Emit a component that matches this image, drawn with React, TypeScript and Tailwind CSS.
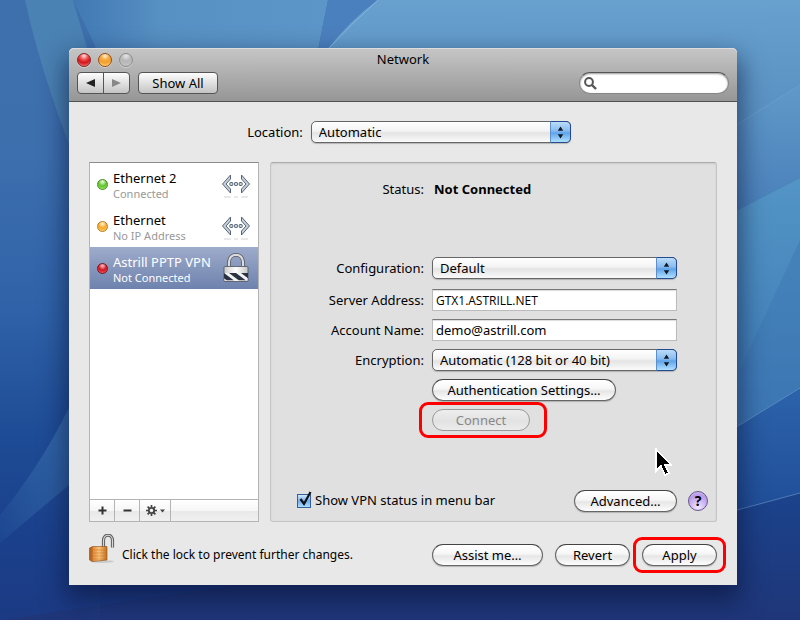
import type { ReactNode } from "react";

const FONT = "font-['Noto_Sans','Open_Sans',sans-serif]";

function Wallpaper() {
  return (
    <svg className="absolute inset-0 h-full w-full" viewBox="0 0 800 620" preserveAspectRatio="none" aria-hidden="true">
      <defs>
        <linearGradient id="deep" x1="0" y1="0" x2="0" y2="1">
          <stop offset="0" stopColor="#3d70ac" />
          <stop offset="0.25" stopColor="#3d6fae" />
          <stop offset="0.5" stopColor="#2f62a8" />
          <stop offset="0.7" stopColor="#1e4c96" />
          <stop offset="0.85" stopColor="#1b418c" />
          <stop offset="1" stopColor="#1c3a84" />
        </linearGradient>
        <linearGradient id="topLeft" x1="0" y1="0" x2="1" y2="0">
          <stop offset="0" stopColor="#4179b4" />
          <stop offset="0.35" stopColor="#5790c2" />
          <stop offset="1" stopColor="#5c95c7" />
        </linearGradient>
        <linearGradient id="mid" x1="0" y1="0" x2="0" y2="1">
          <stop offset="0" stopColor="#5395c5" />
          <stop offset="1" stopColor="#3c78b5" />
        </linearGradient>
        <linearGradient id="upper" x1="0" y1="0" x2="0" y2="1">
          <stop offset="0" stopColor="#6099c9" />
          <stop offset="1" stopColor="#497fb9" />
        </linearGradient>
        <linearGradient id="top" x1="0" y1="0" x2="0" y2="1">
          <stop offset="0" stopColor="#68a1ce" />
          <stop offset="1" stopColor="#578fc1" />
        </linearGradient>
        <linearGradient id="low" x1="0" y1="0" x2="0" y2="1">
          <stop offset="0" stopColor="#2c63aa" />
          <stop offset="1" stopColor="#204e98" />
        </linearGradient>
        <linearGradient id="floor" x1="0" y1="0" x2="0" y2="1">
          <stop offset="0" stopColor="#1b438c" />
          <stop offset="1" stopColor="#1f3679" />
        </linearGradient>
        <linearGradient id="wing" x1="1" y1="0" x2="0" y2="1">
          <stop offset="0" stopColor="#376fae" />
          <stop offset="1" stopColor="#1d4690" />
        </linearGradient>
        <linearGradient id="underWing" x1="1" y1="0" x2="0" y2="1">
          <stop offset="0" stopColor="#2a5ea4" stopOpacity="0.9" />
          <stop offset="0.6" stopColor="#1c3f8a" stopOpacity="0" />
        </linearGradient>
      </defs>
      <rect width="800" height="620" fill="url(#deep)" />
      <path d="M25 0Q40 70 75 160H120L73 0Z" fill="#4a82b3" />
      <path d="M73 0L97 50H318L328 0Z" fill="url(#topLeft)" />
      <path d="M328 0H378L327 50H318Z" fill="#4b80be" />
      <path d="M378 0H800V85L730 129L320 60L327 50Q350 20 378 0Z" fill="url(#top)" />
      <path d="M378 0Q350 25 327 50" fill="none" stroke="#86b5dc" />
      <path d="M800 85L730 129V214L800 178Z" fill="url(#upper)" />
      <path d="M800 178L730 214V431L800 388Z" fill="url(#mid)" />
      <path d="M800 240L740 370V431L800 388Z" fill="#3971af" opacity="0.35" />
      <path d="M800 388L730 431V512L800 493Z" fill="url(#low)" />
      <path d="M800 493L730 512L0 620H800Z" fill="url(#floor)" />
      <path d="M800 85L730 129M800 388L730 431M800 493L730 512" stroke="#7fb0dc" opacity="0.5" fill="none" />
      <path d="M100 450L0 540V620H100Z" fill="url(#underWing)" />
      <path d="M75 395Q45 460 0 515V543L75 480Z" fill="url(#wing)" />
    </svg>
  );
}

function Light({ label, tone }: { label: string; tone: string }) {
  return (
    <button
      type="button"
      aria-label={label}
      className={`h-3.5 w-3.5 rounded-full border shadow-[0_1px_0_#d0d0d0] ${tone}`}
    />
  );
}

function Pill({ children, className = "", disabled = false }: { children: ReactNode; className?: string; disabled?: boolean }) {
  return (
    <button
      type="button"
      disabled={disabled}
      className={`h-[22px] rounded-full border border-[#666] border-t-[#444] bg-[linear-gradient(#fff_0%,#f6f6f6_45%,#e6e6e6_55%,#fdfdfd_100%)] text-center leading-5 shadow-[0_1px_1px_#8888] disabled:border-[#999] disabled:bg-[linear-gradient(#eee,#e2e2e2_55%,#ececec)] disabled:text-[#888] disabled:shadow-none ${className}`}
    >
      {children}
    </button>
  );
}

function PopUp({ id, value, className = "" }: { id: string; value: string; className?: string }) {
  return (
    <div className={`relative ${className}`}>
      <select
        id={id}
        className="block h-[22px] w-full appearance-none rounded-[5px] border border-[#666] bg-[linear-gradient(#fff_0%,#f3f3f3_45%,#e4e4e4_55%,#fafafa_100%)] pr-6 pl-[7px] leading-5 shadow-[0_1px_1px_#8888]"
      >
        <option>{value}</option>
      </select>
      <span className="pointer-events-none absolute inset-y-0 right-0 flex w-[21px] items-center justify-center rounded-r-[5px] border border-[#244a91] border-l-[#5c8fcc] bg-[linear-gradient(#bcdcf8_0%,#86bbf0_45%,#5ea4ea_55%,#b0e0ff_100%)]">
        <svg width="7" height="13" viewBox="0 0 7 13" aria-hidden="true">
          <path d="M3.500 0.500L6.200 4.800H0.800ZM0.800 8.200H6.200L3.500 12.500Z" fill="#101820" />
        </svg>
      </span>
    </div>
  );
}

function EthernetIcon() {
  return (
    <svg width="30" height="28" viewBox="0 0 30 28" aria-hidden="true">
      <g fill="#c6d1dc" stroke="#566475" strokeWidth="1" strokeLinejoin="round">
        <path d="M9.500 5V9L5 14L9.500 19V23L1.500 14Z" />
        <path d="M20.500 5V9L25 14L20.500 19V23L28.500 14Z" />
        <rect x="8.800" y="12.500" width="3" height="3" rx="0.700" />
        <rect x="13.500" y="12.500" width="3" height="3" rx="0.700" />
        <rect x="18.200" y="12.500" width="3" height="3" rx="0.700" />
      </g>
      <path d="M3 27H10M13 27H17M20 27H27" stroke="#e2e2e2" strokeWidth="1.500" />
    </svg>
  );
}

function VpnLockIcon() {
  return (
    <svg width="30" height="30" viewBox="0 0 30 30" aria-hidden="true">
      <defs>
        <linearGradient id="steel" x1="0" x2="1" y1="0" y2="0">
          <stop offset="0" stopColor="#c9c9c9" />
          <stop offset="0.5" stopColor="#fff" />
          <stop offset="1" stopColor="#c4c4c4" />
        </linearGradient>
        <clipPath id="band">
          <rect x="3" y="20" width="24" height="7.500" />
        </clipPath>
      </defs>
      <path d="M8 15V9C8 -0.500 22 -0.500 22 9V15" fill="none" stroke="#505560" strokeWidth="3.800" />
      <path d="M8 15V9C8 -0.500 22 -0.500 22 9V15" fill="none" stroke="#dcdcdc" strokeWidth="2.200" />
      <rect x="3" y="13.500" width="24" height="15" rx="1" fill="url(#steel)" stroke="#4c525e" strokeWidth="0.800" />
      <rect x="3.500" y="20" width="23" height="7.500" fill="#f2f2f2" />
      <path d="M-4 20H3L13 27.500H6ZM8 20H15L25 27.500H18ZM20 20H27L37 27.500H30Z" fill="#2a3242" clipPath="url(#band)" />
    </svg>
  );
}

function PadlockIcon() {
  return (
    <svg width="28" height="32" viewBox="0 0 28 32" aria-hidden="true">
      <defs>
        <linearGradient id="brass" x1="0" x2="1" y1="0" y2="0">
          <stop offset="0" stopColor="#a65a1c" />
          <stop offset="0.180" stopColor="#c87427" />
          <stop offset="0.220" stopColor="#e58f3a" />
          <stop offset="0.550" stopColor="#fbc37b" />
          <stop offset="1" stopColor="#c4701f" />
        </linearGradient>
      </defs>
      <ellipse cx="13" cy="27.500" rx="12" ry="1.500" fill="#cacaca" />
      <path d="M14.500 14V6.500C14.500 -0.500 23.500 -0.500 23.500 6.500V13.500" fill="none" stroke="#5c5c5c" strokeWidth="3.200" />
      <path d="M14.500 14V6.500C14.500 -0.500 23.500 -0.500 23.500 6.500V13.500" fill="none" stroke="#d8d8d8" strokeWidth="1.200" />
      <path d="M0.500 14L3.500 12.500H18V26L3.500 27.500L0.500 26Z" fill="url(#brass)" stroke="#8f4d17" strokeWidth="0.600" />
      <path d="M4.500 16H17M4.500 19H17M4.500 22H17M4.500 25H17" stroke="#b8691f" strokeWidth="0.700" opacity="0.600" />
    </svg>
  );
}

function Service({ name, state, dot, icon, selected = false }: { name: string; state: string; dot: string; icon: ReactNode; selected?: boolean }) {
  return (
    <li>
      <button
        type="button"
        className={`flex h-[42px] w-full items-center px-[7px] text-left ${
          selected ? "bg-[linear-gradient(#9eabcb,#6d82ad)] text-white" : "text-black"
        }`}
      >
        <span className={`h-[11px] w-[11px] shrink-0 rounded-full border ${dot}`} />
        <span className="ml-[5px] flex-1 whitespace-nowrap">
          <span className="block leading-[18px]">{name}</span>
          <span className={`block text-[11px] leading-[13px] ${selected ? "text-white" : "text-[#999]"}`}>{state}</span>
        </span>
        {icon}
      </button>
    </li>
  );
}

const labelClass = "text-right leading-[22px]";
const fieldClass =
  "h-[22px] w-full border border-[#bbb] border-t-[#777] bg-white px-[3px] leading-5 shadow-[inset_0_1px_1px_#ddd] outline-none";

export default function App() {
  return (
    <div className={`relative min-h-screen overflow-hidden bg-[#24559d] pt-12 pr-[63px] pb-[35px] pl-[69px] text-[13px] text-black ${FONT}`}>
      <Wallpaper />
      <main className="relative rounded-t-[5px] bg-[#e8e8e8] shadow-[0_12px_26px_3px_rgba(8,15,50,0.6)]">
        <header className="rounded-t-[5px] border-b border-[#515151] bg-[linear-gradient(#c6c6c6,#969696)] px-2 pb-[7px] shadow-[inset_0_1px_0_#ddd]">
          <div className="grid h-6 grid-cols-[1fr_auto_1fr] items-center">
            <div className="flex gap-[7px]">
              <Light label="Close" tone="border-[#8d2222] bg-[radial-gradient(circle_at_50%_15%,#ffe6e6_0%,#ec4a4a_35%,#d0141c_60%,#ff9a9a_100%)]" />
              <Light label="Minimize" tone="border-[#9a4a1c] bg-[radial-gradient(circle_at_50%_15%,#fff4dc_0%,#f5a83c_35%,#f0a030_60%,#fff08a_100%)]" />
              <Light label="Zoom" tone="border-[#8c8c8c] bg-[radial-gradient(circle_at_50%_15%,#e6e6e6_0%,#b5b5b5_45%,#c9c9c9_100%)]" />
            </div>
            <h1>Network</h1>
          </div>
          <div className="flex h-[22px] items-stretch">
            <div className="flex w-[53px] overflow-hidden rounded-[4px] border border-[#555] bg-[linear-gradient(#fdfdfd,#c4c4c4)]">
              <button type="button" aria-label="Back" className="flex flex-1 items-center justify-center border-r border-[#555]">
                <svg width="9" height="8" viewBox="0 0 9 8" aria-hidden="true"><path d="M9 0V8L0 4Z" fill="#222" /></svg>
              </button>
              <button type="button" aria-label="Forward" className="flex flex-1 items-center justify-center">
                <svg width="9" height="8" viewBox="0 0 9 8" aria-hidden="true"><path d="M0 0V8L9 4Z" fill="#888" /></svg>
              </button>
            </div>
            <button type="button" className="ml-2 w-20 rounded-[4px] border border-[#555] bg-[linear-gradient(#fdfdfd,#c4c4c4)] leading-5">
              Show All
            </button>
            <label className="ml-auto flex w-[150px] items-center rounded-full border border-[#888] border-t-[#555] bg-white pl-1 shadow-[inset_0_1px_2px_#999]">
              <svg width="13" height="13" viewBox="0 0 13 13" aria-hidden="true">
                <circle cx="5" cy="5" r="3.900" fill="none" stroke="#555" strokeWidth="2" />
                <path d="M8 8L12 12" stroke="#555" strokeWidth="2.400" />
              </svg>
              <input type="search" aria-label="Search" className="min-w-0 flex-1 bg-transparent px-1 outline-none" />
            </label>
          </div>
        </header>

        <div className="px-5 pt-[19px] pb-[19px]">
          <div className="flex items-center justify-center gap-2 pl-3">
            <label htmlFor="location" className={labelClass}>Location:</label>
            <PopUp id="location" value="Automatic" className="w-[260px]" />
          </div>

          <div className="mt-[19px] flex h-[360px] items-stretch gap-[11px]">
            <aside className="flex w-[170px] shrink-0 flex-col border border-[#b4b4b4] border-t-[#8c8c8c] bg-white">
              <ul className="flex-1">
                <Service name="Ethernet 2" state="Connected" icon={<EthernetIcon />} dot="border-[#3f8f1d] bg-[radial-gradient(circle_at_50%_20%,#efffdc,#5fc02f_50%,#b6f46b)]" />
                <Service name="Ethernet" state="No IP Address" icon={<EthernetIcon />} dot="border-[#c07a1d] bg-[radial-gradient(circle_at_50%_20%,#fff4d4,#f6a62a_50%,#ffe070)]" />
                <Service selected name="Astrill PPTP VPN" state="Not Connected" icon={<VpnLockIcon />} dot="border-[#7d1220] bg-[radial-gradient(circle_at_50%_20%,#ffc4c4,#d01420_50%,#ff6a6a)]" />
              </ul>
              <div className="flex h-[22px] border-t border-[#b4b4b4] bg-[linear-gradient(#fff_0%,#f6f6f6_50%,#e8e8e8_52%,#f0f0f0_100%)]">
                <button type="button" aria-label="Add service" className="flex w-[25px] items-center justify-center border-r border-[#b4b4b4]">
                  <svg width="9" height="9" viewBox="0 0 9 9" aria-hidden="true"><path d="M4.500 0.500V8.500M0.500 4.500H8.500" stroke="#333" strokeWidth="2" /></svg>
                </button>
                <button type="button" aria-label="Remove service" className="flex w-[25px] items-center justify-center border-r border-[#b4b4b4]">
                  <svg width="9" height="9" viewBox="0 0 9 9" aria-hidden="true"><path d="M0.500 4.500H8.500" stroke="#333" strokeWidth="2" /></svg>
                </button>
                <button type="button" aria-label="Service actions" className="flex w-[31px] items-center justify-center gap-[3px] border-r border-[#b4b4b4]">
                  <svg width="11" height="11" viewBox="0 0 11 11" aria-hidden="true">
                    <circle cx="5.500" cy="5.500" r="2.700" fill="none" stroke="#444" strokeWidth="1.800" />
                    <path d="M5.500 0V2.500M5.500 8.500V11M0 5.500H2.500M8.500 5.500H11M1.600 1.600L3.400 3.400M7.600 7.600L9.400 9.400M9.400 1.600L7.600 3.400M3.400 7.600L1.600 9.400" stroke="#444" strokeWidth="1.700" />
                  </svg>
                  <svg width="5" height="4" viewBox="0 0 5 4" aria-hidden="true"><path d="M0 0.500H5L2.500 3.500Z" fill="#444" /></svg>
                </button>
              </div>
            </aside>

            <section className="relative flex min-w-0 flex-1 flex-col rounded-[3px] border border-[#c4c4c4] border-t-[#aaa] bg-[#e0e0e0] pr-2 pb-[9px] pl-[26px] shadow-[inset_0_1px_2px_#ccc]">
              <div className="grid grid-cols-[127px_245px] gap-x-2 gap-y-2 pt-[15px]">
                <span className={labelClass}>Status:</span>
                <output className="pl-0.5 leading-[22px] font-bold">Not Connected</output>
                <label htmlFor="configuration" className={`mt-[49px] mb-0.5 ${labelClass}`}>Configuration:</label>
                <PopUp id="configuration" value="Default" className="mt-[49px] mb-0.5" />
                <label htmlFor="server" className={labelClass}>Server Address:</label>
                <input id="server" defaultValue="GTX1.ASTRILL.NET" className={`${fieldClass} font-['Open_Sans','Noto_Sans',sans-serif] text-xs`} />
                <label htmlFor="account" className={labelClass}>Account Name:</label>
                <input id="account" defaultValue="demo@astrill.com" className={fieldClass} />
                <label htmlFor="encryption" className={labelClass}>Encryption:</label>
                <PopUp id="encryption" value="Automatic (128 bit or 40 bit)" />
                <Pill className="col-start-2 w-[184px]">Authentication Settings…</Pill>
                <div className="relative col-start-2 w-[98px]">
                  <Pill disabled className="block w-full">Connect</Pill>
                  <span className="pointer-events-none absolute -top-[7px] -right-[17px] -bottom-[7px] -left-[13px] rounded-[9px] border-3 border-[#f00]" />
                </div>
              </div>
              <div className="mt-auto flex items-center">
                <label className="flex items-center gap-1">
                  <span className="relative flex">
                    <input type="checkbox" defaultChecked className="h-3.5 w-3.5 appearance-none border border-[#345f9c] bg-[linear-gradient(#d4e8fb,#72aef0_50%,#a9dcff)]" />
                    <svg className="pointer-events-none absolute -top-1 left-0" width="16" height="18" viewBox="0 0 16 18" aria-hidden="true">
                      <path d="M3.500 9L7 14L13.500 2" fill="none" stroke="#111" strokeWidth="2.200" />
                    </svg>
                  </span>
                  Show VPN status in menu bar
                </label>
                <Pill className="ml-auto w-[103px]">Advanced…</Pill>
                <button type="button" aria-label="Help" className="ml-[11px] h-5 w-5 rounded-full border border-[#65558c] bg-[radial-gradient(circle_at_50%_85%,#f4eaff,#cbb2f4_45%,#b79ae6_70%,#e9dcff)] text-sm leading-[18px] font-bold">
                  ?
                </button>
              </div>
              <svg className="pointer-events-none absolute top-[285px] right-[43px]" width="18" height="30" viewBox="0 0 18 30" shapeRendering="crispEdges" aria-hidden="true">
                <path d="M1 1V23L6 18L10 27L14 25L10 17H16Z" fill="#000" stroke="#fff" strokeWidth="1.500" />
              </svg>
            </section>
          </div>

          <footer className="mt-3 flex items-end">
            <div className="flex items-end gap-[5px] text-xs">
              <button type="button" aria-label="Lock"><PadlockIcon /></button>
              <p className="leading-[22px]">Click the lock to prevent further changes.</p>
            </div>
            <div className="ml-auto flex gap-3">
              <Pill className="w-[111px]">Assist me…</Pill>
              <Pill className="w-[75px]">Revert</Pill>
              <div className="relative w-[75px]">
                <Pill className="block w-full">Apply</Pill>
                <span className="pointer-events-none absolute -inset-x-[9px] -inset-y-[7px] rounded-[9px] border-3 border-[#f00]" />
              </div>
            </div>
          </footer>
        </div>
      </main>
    </div>
  );
}
